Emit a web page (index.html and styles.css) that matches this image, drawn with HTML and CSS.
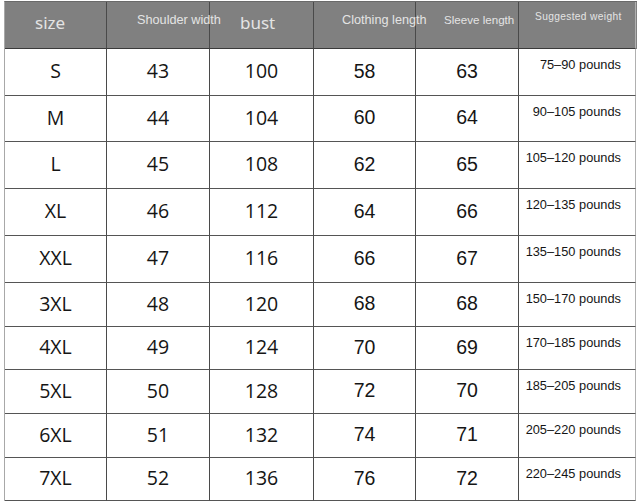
FILE: index.html
```html
<!DOCTYPE html>
<html>
<head>
<meta charset="utf-8">
<link rel="stylesheet" href="styles.css">
</head>
<body>
<div class="chart">
  <div class="row head">
    <div class="c h-size">size</div>
    <div class="c h-sm h-shoulder">Shoulder width</div>
    <div class="c h-bust">bust</div>
    <div class="c h-sm h-cloth">Clothing length</div>
    <div class="c h-sm h-sleeve">Sleeve length</div>
    <div class="c h-weight">Suggested weight</div>
  </div>
  <div class="row r47"><div class="c n">S</div><div class="c n">43</div><div class="c n">100</div><div class="c a">58</div><div class="c a">63</div><div class="c w">75–90 pounds</div></div>
  <div class="row r46"><div class="c n">M</div><div class="c n">44</div><div class="c n">104</div><div class="c a">60</div><div class="c a">64</div><div class="c w">90–105 pounds</div></div>
  <div class="row r47"><div class="c n">L</div><div class="c n">45</div><div class="c n">108</div><div class="c a">62</div><div class="c a">65</div><div class="c w">105–120 pounds</div></div>
  <div class="row r47"><div class="c n">XL</div><div class="c n">46</div><div class="c n">112</div><div class="c a">64</div><div class="c a">66</div><div class="c w">120–135 pounds</div></div>
  <div class="row r47"><div class="c n">XXL</div><div class="c n">47</div><div class="c n">116</div><div class="c a">66</div><div class="c a">67</div><div class="c w">135–150 pounds</div></div>
  <div class="row r44"><div class="c n">3XL</div><div class="c n">48</div><div class="c n">120</div><div class="c a">68</div><div class="c a">68</div><div class="c w">150–170 pounds</div></div>
  <div class="row r43"><div class="c n">4XL</div><div class="c n">49</div><div class="c n">124</div><div class="c a">70</div><div class="c a">69</div><div class="c w">170–185 pounds</div></div>
  <div class="row r44"><div class="c n">5XL</div><div class="c n">50</div><div class="c n">128</div><div class="c a">72</div><div class="c a">70</div><div class="c w">185–205 pounds</div></div>
  <div class="row r44"><div class="c n">6XL</div><div class="c n">51</div><div class="c n">132</div><div class="c a">74</div><div class="c a">71</div><div class="c w">205–220 pounds</div></div>
  <div class="row r43"><div class="c n">7XL</div><div class="c n">52</div><div class="c n">136</div><div class="c a">76</div><div class="c a">72</div><div class="c w">220–245 pounds</div></div>
</div>
</body>
</html>
```
FILE: styles.css
```css
html, body {
  margin: 0;
  padding: 0;
  background: #ffffff;
}

.chart {
  margin: 1px 0 0 4px;
  width: 632px;
  border-left: 1px solid #a8a8a8;
  border-top: 1px solid #6a6a6a;
}

.row {
  display: grid;
  grid-template-columns: 102px 103px 104px 102px 103px 117px;
  box-sizing: border-box;
}

.c {
  box-sizing: border-box;
  border-right: 1px solid #4a4a4a;
  border-bottom: 1px solid #555555;
  display: flex;
  align-items: center;
  justify-content: center;
  white-space: nowrap;
  color: #151515;
}

.c:last-child {
  border-right-color: #b0b0b0;
}

.head {
  height: 47px;
  background: #808080;
}

.head .c {
  justify-content: flex-start;
  align-items: flex-start;
  color: #e4e4e4;
  border-bottom-color: #3a3a3a;
}

.h-size, .h-bust {
  font-family: "Noto Sans", "Open Sans", sans-serif;
  font-size: 17px;
  line-height: 20px;
  padding: 11px 0 0 30px;
}

.h-sm {
  font-family: "Liberation Sans", Arial, sans-serif;
  font-size: 12.7px;
  line-height: 14px;
  padding-top: 11px;
}

.h-shoulder { padding-left: 30px; }
.h-cloth { padding-left: 28px; }
.h-sleeve { padding-left: 28px; font-size: 11.6px; }

.h-weight {
  font-family: "Liberation Sans", Arial, sans-serif;
  font-size: 10.2px;
  letter-spacing: 0.35px;
  line-height: 12px;
  padding: 9px 0 0 16px;
}

.r47 { height: 47px; }
.r46 { height: 46px; }
.r44 { height: 44px; }
.r43 { height: 43px; }

.n {
  font-family: "Open Sans", "Noto Sans", sans-serif;
  font-size: 19.5px;
  padding-bottom: 3px;
}

.a {
  font-family: "Liberation Sans", Arial, sans-serif;
  font-size: 19.5px;
  padding-bottom: 2px;
}

.w {
  font-family: "Liberation Sans", Arial, sans-serif;
  font-size: 12.8px;
  line-height: 15px;
  align-items: flex-start;
  justify-content: flex-end;
  padding: 8px 14px 0 0;
}
```
